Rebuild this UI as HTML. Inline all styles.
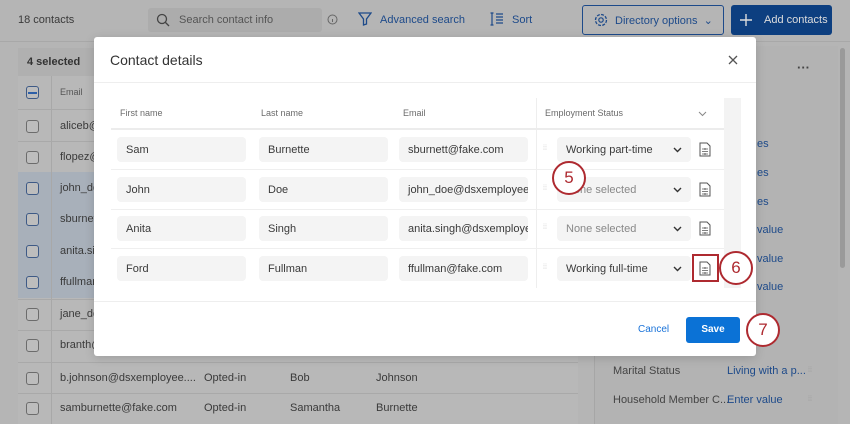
<!DOCTYPE html>
<html><head><meta charset="utf-8"><style>
*{box-sizing:border-box;margin:0;padding:0}
body{width:850px;height:424px;overflow:hidden;position:relative;font-family:"Liberation Sans",sans-serif;background:#b5b5b5;color:#333}
.a{position:absolute;white-space:nowrap}
.t{font-size:11px;color:#3a3a3a}
.cb{position:absolute;width:13px;height:13px;border:1.3px solid #6c6c6c;border-radius:3px;background:#bdbdbd}
.cbk{border-color:#3e5a86}
.inp{position:absolute;height:25px;background:#f4f4f4;border-radius:4px;font-size:11px;color:#3a3a3a;padding:7px 9px}
.hd{position:absolute;font-size:9px;color:#6b6b6b;top:108px}
.doc{position:absolute;width:12px;height:15px}
.sep{position:absolute;left:18px;width:560px;height:1px;background:#a9a9a9}
.circ{position:absolute;width:34px;height:34px;border:2.5px solid #ae2a30;border-radius:50%;background:#fff;color:#ae2a30;font-size:17px;text-align:center;line-height:29px}
</style></head><body>
<!-- header -->
<div class="a t" style="left:18px;top:14px">18 contacts</div>
<div class="a" style="left:148px;top:8px;width:174px;height:24px;background:#acacac;border-radius:3px"></div>
<svg class="a" style="left:156px;top:13px" width="14" height="14"><circle cx="6" cy="6" r="4.5" fill="none" stroke="#444" stroke-width="1.3"/><line x1="9.5" y1="9.5" x2="13" y2="13" stroke="#444" stroke-width="1.3"/></svg>
<div class="a t" style="left:179px;top:14px;color:#555">Search contact info</div>
<svg class="a" style="left:327px;top:14px" width="11" height="11"><circle cx="5.5" cy="5.5" r="4.5" fill="none" stroke="#666" stroke-width="1"/><line x1="5.5" y1="5" x2="5.5" y2="8" stroke="#666"/></svg>
<svg class="a" style="left:358px;top:12px" width="14" height="14"><path d="M1 1H13L8.5 7V12L5.5 13V7Z" fill="none" stroke="#1d4a8a" stroke-width="1.3"/></svg>
<div class="a t" style="left:380px;top:14px;color:#1d4a8a">Advanced search</div>
<svg class="a" style="left:490px;top:12px" width="14" height="14"><path d="M2 1V13M0.5 1H3.5M0.5 13H3.5M6 2H13M6 5H13M6 8H13M6 11H13" stroke="#1d4a8a" stroke-width="1.2" fill="none"/></svg>
<div class="a t" style="left:512px;top:14px;color:#1d4a8a">Sort</div>
<div class="a" style="left:582px;top:5px;width:142px;height:30px;border:1px solid #1d4a8a;border-radius:3px"></div>
<svg class="a" style="left:594px;top:13px" width="14" height="14"><circle cx="7" cy="7" r="5.5" fill="none" stroke="#1d4a8a" stroke-width="1.3" stroke-dasharray="3 1.3"/><circle cx="7" cy="7" r="2.2" fill="none" stroke="#1d4a8a" stroke-width="1.2"/></svg>
<div class="a t" style="left:615px;top:14px;color:#1d4a8a">Directory options &nbsp;⌄</div>
<div class="a" style="left:731px;top:5px;width:101px;height:30px;background:#0d3f80;border-radius:3px"></div>
<svg class="a" style="left:740px;top:14px" width="12" height="12"><path d="M6 0V12M0 6H12" stroke="#ddd" stroke-width="1.4"/></svg>
<div class="a t" style="left:764px;top:14px;color:#ddd">Add contacts</div>
<div class="a" style="left:0;top:41px;width:850px;height:1px;background:#a8a8a8"></div>
<!-- left table -->
<div class="a" style="left:18px;top:48px;width:560px;height:376px;background:#b8b8b8"></div>
<div class="a" style="left:18px;top:48px;width:560px;height:28px;background:#b0b0b0"></div>
<div class="a t" style="left:27px;top:56px;font-weight:bold;color:#333">4 selected</div>
<div class="a" style="left:18px;top:172px;width:560px;height:126px;background:#a8b0ba"></div>
<div class="a" style="left:51px;top:76px;width:1px;height:348px;background:#a8a8a8"></div>
<div class="cb cbk" style="left:26px;top:86px"></div><div class="a" style="left:28px;top:92px;width:9px;height:1.5px;background:#2d5fa8"></div>
<div class="a" style="left:60px;top:87px;font-size:9px;color:#555">Email</div>
<div class="sep" style="top:109px"></div>
<div class="sep" style="top:141px"></div>
<div class="sep" style="top:299px"></div>
<div class="sep" style="top:330px"></div>
<div class="sep" style="top:362px"></div>
<div class="sep" style="top:393px"></div>
<div class="cb" style="left:26px;top:120px"></div><div class="a t" style="left:60px;top:120px">aliceb@</div>
<div class="cb" style="left:26px;top:151px"></div><div class="a t" style="left:60px;top:151px">flopez@</div>
<div class="cb cbk" style="left:26px;top:182px"></div><div class="a t" style="left:60px;top:182px">john_do</div>
<div class="cb cbk" style="left:26px;top:213px"></div><div class="a t" style="left:60px;top:213px">sburnet</div>
<div class="cb cbk" style="left:26px;top:245px"></div><div class="a t" style="left:60px;top:245px">anita.si</div>
<div class="cb cbk" style="left:26px;top:276px"></div><div class="a t" style="left:60px;top:276px">ffullmar</div>
<div class="cb" style="left:26px;top:308px"></div><div class="a t" style="left:60px;top:308px">jane_do</div>
<div class="cb" style="left:26px;top:339px"></div><div class="a t" style="left:60px;top:339px">branth@</div>
<div class="cb" style="left:26px;top:372px"></div><div class="a t" style="left:60px;top:372px">b.johnson@dsxemployee....</div>
<div class="a t" style="left:204px;top:372px">Opted-in</div><div class="a t" style="left:290px;top:372px">Bob</div><div class="a t" style="left:376px;top:372px">Johnson</div>
<div class="cb" style="left:26px;top:402px"></div><div class="a t" style="left:60px;top:402px">samburnette@fake.com</div>
<div class="a t" style="left:204px;top:402px">Opted-in</div><div class="a t" style="left:290px;top:402px">Samantha</div><div class="a t" style="left:376px;top:402px">Burnette</div>
<!-- right panel -->
<div class="a" style="left:594px;top:46px;width:244px;height:378px;background:#b3b3b3;border-left:1px solid #a6a6a6"></div>
<div class="a" style="left:840px;top:48px;width:5px;height:220px;background:#9a9a9a;border-radius:3px"></div>
<div class="a" style="left:797px;top:60px;font-size:13px;font-weight:bold;color:#444">···</div>
<div class="a t" style="left:757px;top:138px;color:#1d4a8a">es</div>
<div class="a t" style="left:757px;top:167px;color:#1d4a8a">es</div>
<div class="a t" style="left:757px;top:196px;color:#1d4a8a">es</div>
<div class="a t" style="left:757px;top:224px;color:#1d4a8a">value</div>
<div class="a t" style="left:757px;top:253px;color:#1d4a8a">value</div>
<div class="a t" style="left:757px;top:281px;color:#1d4a8a">value</div>
<div class="a t" style="left:613px;top:365px;color:#444">Marital Status</div>
<div class="a t" style="left:727px;top:365px;color:#1d4a8a">Living with a p...</div>
<div class="a" style="left:808px;top:367px;font-size:7px;color:#999">⁞⁞</div>
<div class="a t" style="left:613px;top:394px;color:#444">Household Member C...</div>
<div class="a t" style="left:727px;top:394px;color:#1d4a8a">Enter value</div>
<div class="a" style="left:808px;top:396px;font-size:7px;color:#999">⁞⁞</div>
<!-- modal -->
<div class="a" style="left:94px;top:37px;width:662px;height:319px;background:#fff;border-radius:3px;box-shadow:0 2px 10px rgba(0,0,0,.15)"></div>
<div class="a" style="left:110px;top:52px;font-size:14px;color:#333">Contact details</div>
<svg class="a" style="left:728px;top:55px" width="10" height="10"><path d="M1 1L9 9M9 1L1 9" stroke="#555" stroke-width="1.3"/></svg>
<div class="a" style="left:94px;top:82px;width:662px;height:1px;background:#eee"></div>
<div class="a" style="left:724px;top:98px;width:17px;height:190px;background:#f3f3f3"></div>
<div class="hd" style="left:120px">First name</div>
<div class="hd" style="left:261px">Last name</div>
<div class="hd" style="left:403px">Email</div>
<div class="hd" style="left:545px">Employment Status</div>
<svg class="a" style="left:698px;top:111px" width="9" height="6"><path d="M1 1L4.5 4.5L8 1" stroke="#888" fill="none"/></svg>
<div class="a" style="left:536px;top:98px;width:1px;height:190px;background:#eee"></div>
<div class="a" style="left:111px;top:128px;width:613px;height:2px;background:#ececec"></div>
<div class="a" style="left:111px;top:169px;width:613px;height:1px;background:#efefef"></div>
<div class="a" style="left:111px;top:209px;width:613px;height:1px;background:#efefef"></div>
<div class="a" style="left:111px;top:248px;width:613px;height:1px;background:#efefef"></div>
<div class="a" style="left:94px;top:301px;width:662px;height:1px;background:#eee"></div>

<div class="inp" style="left:117px;top:137px;width:129px">Sam</div>
<div class="inp" style="left:259px;top:137px;width:129px">Burnette</div>
<div class="inp" style="left:399px;top:137px;width:129px">sburnett@fake.com</div>
<div class="inp" style="left:117px;top:177px;width:129px">John</div>
<div class="inp" style="left:259px;top:177px;width:129px">Doe</div>
<div class="inp" style="left:399px;top:177px;width:129px;overflow:hidden">john_doe@dsxemployee</div>
<div class="inp" style="left:117px;top:216px;width:129px">Anita</div>
<div class="inp" style="left:259px;top:216px;width:129px">Singh</div>
<div class="inp" style="left:399px;top:216px;width:129px;overflow:hidden">anita.singh@dsxemploye</div>
<div class="inp" style="left:117px;top:256px;width:129px">Ford</div>
<div class="inp" style="left:259px;top:256px;width:129px">Fullman</div>
<div class="inp" style="left:399px;top:256px;width:129px">ffullman@fake.com</div>

<div class="inp" style="left:557px;top:137px;width:134px">Working part-time</div>
<div class="inp" style="left:557px;top:177px;width:134px;color:#888">None selected</div>
<div class="inp" style="left:557px;top:216px;width:134px;color:#888">None selected</div>
<div class="inp" style="left:557px;top:256px;width:134px">Working full-time</div>
<div class="a" style="left:543px;top:145px;font-size:7px;color:#ccc">⁞⁞</div>
<div class="a" style="left:543px;top:185px;font-size:7px;color:#ccc">⁞⁞</div>
<div class="a" style="left:543px;top:224px;font-size:7px;color:#ccc">⁞⁞</div>
<div class="a" style="left:543px;top:264px;font-size:7px;color:#ccc">⁞⁞</div>
<svg class="a" style="left:673px;top:147px" width="9" height="6"><path d="M1 1L4.5 4.5L8 1" stroke="#333" stroke-width="1.4" fill="none"/></svg>
<svg class="a" style="left:673px;top:187px" width="9" height="6"><path d="M1 1L4.5 4.5L8 1" stroke="#333" stroke-width="1.4" fill="none"/></svg>
<svg class="a" style="left:673px;top:226px" width="9" height="6"><path d="M1 1L4.5 4.5L8 1" stroke="#333" stroke-width="1.4" fill="none"/></svg>
<svg class="a" style="left:673px;top:266px" width="9" height="6"><path d="M1 1L4.5 4.5L8 1" stroke="#333" stroke-width="1.4" fill="none"/></svg>
<svg class="doc" style="left:699px;top:142px" viewBox="0 0 12 15"><path d="M1 1H8L11 4V14H1Z" fill="none" stroke="#555"/><path d="M3 7H9M3 9.5H9M3 12H9M6 6V8M6 11V13" stroke="#555" stroke-width=".8"/></svg>
<svg class="doc" style="left:699px;top:182px" viewBox="0 0 12 15"><path d="M1 1H8L11 4V14H1Z" fill="none" stroke="#555"/><path d="M3 7H9M3 9.5H9M3 12H9M6 6V8M6 11V13" stroke="#555" stroke-width=".8"/></svg>
<svg class="doc" style="left:699px;top:221px" viewBox="0 0 12 15"><path d="M1 1H8L11 4V14H1Z" fill="none" stroke="#555"/><path d="M3 7H9M3 9.5H9M3 12H9M6 6V8M6 11V13" stroke="#555" stroke-width=".8"/></svg>
<svg class="doc" style="left:699px;top:261px" viewBox="0 0 12 15"><path d="M1 1H8L11 4V14H1Z" fill="none" stroke="#555"/><path d="M3 7H9M3 9.5H9M3 12H9M6 6V8M6 11V13" stroke="#555" stroke-width=".8"/></svg>
<div class="a" style="left:692px;top:254px;width:27px;height:28px;border:2.5px solid #ae2a30"></div>

<div class="a" style="left:638px;top:324px;font-size:10px;color:#1a73d9">Cancel</div>
<div class="a" style="left:686px;top:317px;width:54px;height:26px;background:#0b72d6;border-radius:3px;color:#fff;font-size:10px;font-weight:bold;text-align:center;line-height:26px">Save</div>

<div class="circ" style="left:552px;top:161px">5</div>
<div class="circ" style="left:719px;top:251px">6</div>
<div class="circ" style="left:746px;top:313px">7</div>
</body></html>
